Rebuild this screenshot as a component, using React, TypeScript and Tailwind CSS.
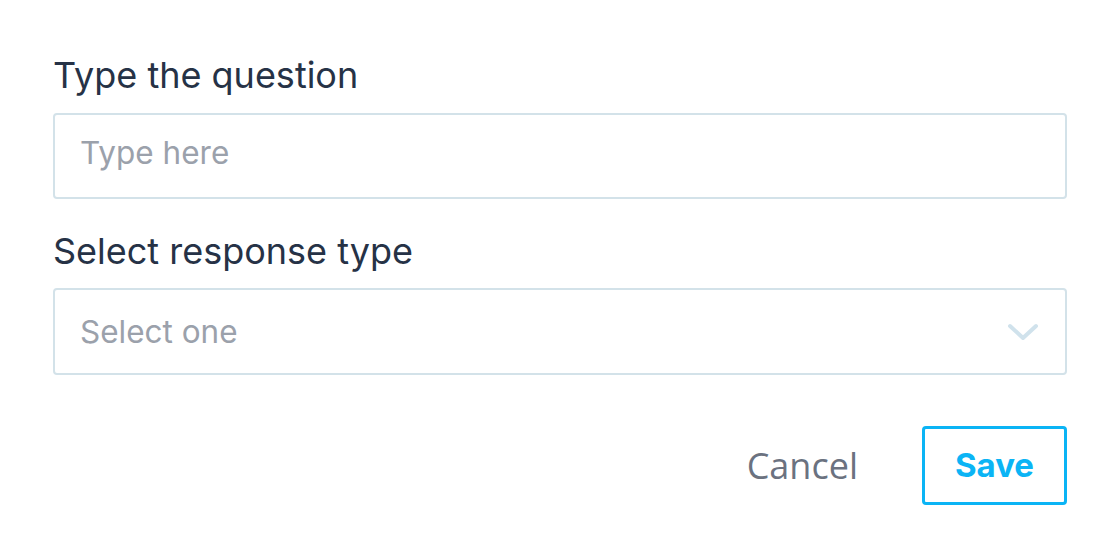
export default function App() {
    return (
        <div className="w-[1120px] h-[554px] bg-white px-[53px] pt-[51px] font-['Inter',sans-serif]">
            <label className="block text-[36px] leading-[48px] text-[#263246]">Type the question</label>
            <input
                placeholder="Type here"
                className="mt-[14px] block w-full h-[86px] rounded-[4px] border-2 border-[#d3e2e9] px-[25px] pb-[8px] text-[31.5px] text-[#263246] placeholder:text-[#9ba1ab] outline-none"
            />
            <label className="mt-[28px] block text-[36px] leading-[48px] text-[#263246]">Select response type</label>
            <div className="mt-[13px] flex h-[87px] w-full items-center justify-between rounded-[4px] border-2 border-[#d3e2e9] pl-[25px] pr-[26px]">
                <span className="text-[31.5px] text-[#9ba1ab]">Select one</span>
                <svg width="32" height="18" viewBox="0 0 32 18" fill="none">
                    <path d="M3 3l13 12L29 3" stroke="#d0e2ec" strokeWidth="4" strokeLinecap="round" strokeLinejoin="round" />
                </svg>
            </div>
            <div className="mt-[51px] flex items-center justify-end gap-[64px]">
                <button className="text-[36px] text-[#6b7280] font-['Open_Sans',sans-serif]">Cancel</button>
                <button className="h-[79px] w-[145px] rounded-[4px] border-[3px] border-[#0bb4f5] text-[33px] font-bold text-[#0bb4f5]">
                    Save
                </button>
            </div>
        </div>
    );
}
